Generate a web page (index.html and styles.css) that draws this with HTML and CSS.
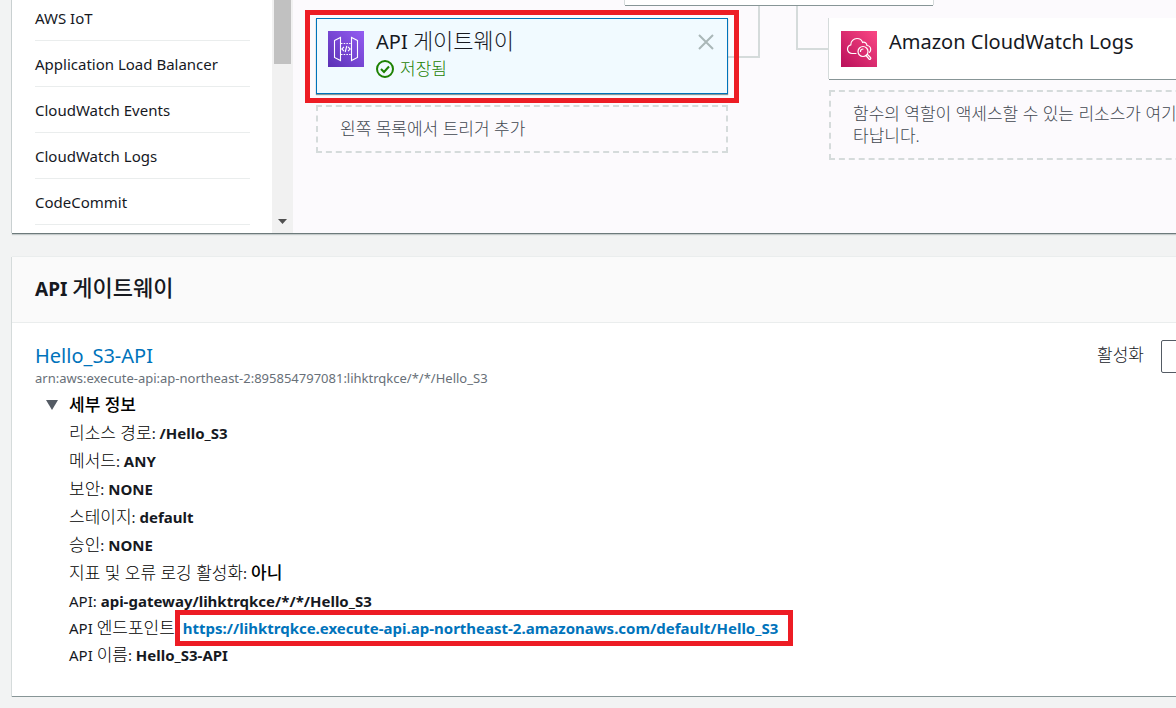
FILE: index.html
```html
<!DOCTYPE html>
<html lang="ko">
<head>
<meta charset="utf-8">
<meta name="viewport" content="width=device-width, initial-scale=1">
<title>API 게이트웨이</title>
<link rel="stylesheet" href="styles.css">
</head>
<body>
<main class="page">
  <section class="designer">
    <ul class="services">
      <li>AWS IoT</li>
      <li>Application Load Balancer</li>
      <li>CloudWatch Events</li>
      <li>CloudWatch Logs</li>
      <li>CodeCommit</li>
    </ul>
    <div class="scrollbar">
      <div class="scroll-thumb"></div>
      <svg class="scroll-arrow" viewBox="0 0 9 5"><path d="M0 0h9L4.500 5z" fill="#505050"/></svg>
    </div>
    <div class="canvas">
      <div class="function-card"></div>
      <div class="flow">
        <div class="column">
          <article class="card trigger">
            <svg class="service-icon" viewBox="0 0 36 36">
              <defs><linearGradient id="violet" x1="0" y1="1" x2="1" y2="0"><stop offset="0" stop-color="#5a30b5"/><stop offset="1" stop-color="#945df2"/></linearGradient></defs>
              <rect width="36" height="36" fill="url(#violet)"/>
              <g fill="none" stroke="#fff" stroke-width="1.100">
                <path d="M6.500 9.500 12.500 6.500v23L6.500 26.500zM29.500 9.500 23.500 6.500v23L29.500 26.500z"/>
                <path d="M13 12.500h10M13 23.500h10" stroke-dasharray="1.500 1.200"/>
                <path d="M16 15.800 13.800 18l2.200 2.200M20 15.800 22.200 18l-2.200 2.200M18.800 15l-1.600 6"/>
              </g>
            </svg>
            <div class="card-text">
              <h2 class="card-title">API <span class="ko-title">게이트웨이</span></h2>
              <p class="saved">
                <svg class="check" viewBox="0 0 18 18" fill="none" stroke="#1d8102" stroke-width="2"><circle cx="9" cy="9" r="8"/><path d="M5 9l3 3 5-5.500"/></svg>
                <span>저장됨</span>
              </p>
            </div>
            <button class="close" type="button" aria-label="제거">
              <svg viewBox="0 0 14 14" stroke="#aab7b8" stroke-width="2"><path d="M0 0l14 14M14 0L0 14"/></svg>
            </button>
            <div class="highlight highlight-card"></div>
          </article>
          <p class="placeholder">왼쪽 목록에서 트리거 추가</p>
        </div>
        <div class="links"><i class="link-left"></i><i class="link-right"></i></div>
        <div class="column">
          <article class="card resource">
            <svg class="service-icon" viewBox="0 0 36 36">
              <defs><linearGradient id="pink" x1="0" y1="1" x2="1" y2="0"><stop offset="0" stop-color="#b9105a"/><stop offset="1" stop-color="#fa4784"/></linearGradient></defs>
              <rect width="36" height="36" fill="url(#pink)"/>
              <g fill="none" stroke="#fff" stroke-width="1.200" stroke-linecap="round">
                <path d="M15 22.500h-4c-2.500 0-4.500-2-4.500-4.200 0-2.300 1.400-3.900 3.300-4.400-.2-3.500 2.700-6.400 6.200-6.400 2.700 0 4.800 1.500 5.600 3.900 2-.8 4.300.8 4.400 3.100 2.300.3 3.700 1.900 3.700 4 0 1.200-.5 2.200-1.200 2.900"/>
                <circle cx="22" cy="20.500" r="5"/><path d="M19.500 20.500a2.500 2.500 0 0 1 2.500-2.500"/>
                <path d="M25 24.500l3 3.500c1 1 2.500-.4 1.500-1.500l-3-3"/>
              </g>
            </svg>
            <h2 class="card-title">Amazon CloudWatch Logs</h2>
          </article>
          <p class="placeholder">함수의 역할이 액세스할 수 있는 리소스가 여기에 나타납니다.</p>
        </div>
      </div>
    </div>
  </section>

  <section class="panel">
    <header class="panel-head"><h1 class="panel-title">API <span class="ko-title">게이트웨이</span></h1></header>
    <div class="panel-body">
      <div class="api-row">
        <div>
          <a class="api-name" href="#api">Hello_S3-API</a>
          <p class="arn">arn:aws:execute-api:ap-northeast-2:895854797081:lihktrqkce/*/*/Hello_S3</p>
        </div>
        <div class="enable"><label for="enable">활성화</label><button id="enable" class="toggle" type="button"></button></div>
      </div>
      <details class="info" open>
        <summary><svg class="caret" viewBox="0 0 12 10"><path d="M0 0h12L6 10z" fill="#545b64"/></svg>세부 정보</summary>
        <ul class="facts">
          <li>리소스 경로<span class="latin">: <b>/Hello_S3</b></span></li>
          <li>메서드<span class="latin">: <b>ANY</b></span></li>
          <li>보안<span class="latin">: <b>NONE</b></span></li>
          <li>스테이지<span class="latin">: <b>default</b></span></li>
          <li>승인<span class="latin">: <b>NONE</b></span></li>
          <li>지표 및 오류 로깅 활성화<span class="latin">: </span><b class="ko-value">아니</b></li>
          <li class="api"><span class="latin">API: <b>api-gateway/lihktrqkce/*/*/Hello_S3</b></span></li>
          <li class="api"><span class="latin">API </span>엔드포인트<span class="latin">: <span class="endpoint"><a href="#endpoint">https://lihktrqkce.execute-api.ap-northeast-2.amazonaws.com/default/Hello_S3</a><span class="highlight highlight-link"></span></span></span></li>
          <li class="api"><span class="latin">API </span>이름<span class="latin">: <b>Hello_S3-API</b></span></li>
        </ul>
      </details>
    </div>
  </section>
</main>
</body>
</html>
```
FILE: styles.css
```css
* { box-sizing: border-box; }
body {
  margin: 0;
  overflow: hidden;
  background: #f2f3f3;
  color: #16191f;
  font-family: "Noto Sans", "Noto Sans CJK KR", sans-serif;
  font-size: 15px;
}
h1, h2, p, ul { margin: 0; padding: 0; }
ul { list-style: none; }
a { color: #0073bb; text-decoration: none; }

/* the console is wider than the window and runs past its right edge */
.page { margin: 0 -88px 0 12px; }

.designer {
  display: flex;
  height: 233px;
  background: #fff;
  box-shadow: 0 1px 0 #6d7a7b, -1px 0 0 #c9d0d1, 0 2px 1px #c5cbcb;
}
.services { width: 260px; padding: 0 22px 0 23px; overflow: hidden; margin-top: -5px; }
.services li { height: 46px; line-height: 46px; border-bottom: 1px solid #eaeded; white-space: nowrap; }
.scrollbar { display: flex; flex-direction: column; justify-content: space-between; align-items: center; width: 21px; padding-bottom: 9px; background: #f1f1f1; }
.scroll-thumb { width: 17px; height: 64px; background: #c1c1c1; }
.scroll-arrow { width: 9px; height: 5px; }

.canvas { flex: 1; padding: 0 23px; background: #fcfafd; }
.function-card { width: 308px; height: 5px; margin: 0 auto; background: #fff; box-shadow: 0 1px 0 #879596, -1px 0 0 #d5dbdb, 1px 0 0 #d5dbdb; }
.flow { display: grid; grid-template-columns: 1fr 101px 1fr; padding-top: 1px; }
.column { padding-top: 12px; }
.card { position: relative; display: flex; gap: 12px; padding: 12px; background: #fff; }
.trigger { height: 76px; padding: 11px; border: 1px solid #0073bb; background: #f1faff; box-shadow: 0 1px 1px #879596; }
.resource { height: 61px; box-shadow: 0 1px 0 #879596, -1px 0 0 #d5dbdb; }
.service-icon { flex: none; width: 36px; height: 36px; margin-top: 1px; }
.card-text { flex: 1; }
.card-title { font-size: 20px; line-height: 24px; font-weight: 400; }
.trigger .card-title { line-height: 20px; }
.ko-title { font-size: 22px; font-weight: 300; }
.saved { display: flex; align-items: center; gap: 6px; color: #1d8102; font-size: 17px; font-weight: 300; line-height: 22px; margin-top: 6px; }
.check { width: 18px; height: 18px; }
.close { align-self: flex-start; display: flex; padding: 5px 3px; border: 0; background: none; }
.close svg { width: 14px; height: 14px; overflow: visible; }
.placeholder { margin-top: 11px; padding: 11px 22px; border: 2px dashed #d5dbdb; color: #414750; font-size: 17px; font-weight: 300; line-height: 22px; }
.links { display: flex; justify-content: space-between; align-items: flex-start; }
.link-left { width: 32px; height: 52px; border: solid #d5dbdb; border-width: 0 2px 2px 0; }
.link-right { width: 33px; height: 44px; border: solid #d5dbdb; border-width: 0 0 2px 2px; }

.highlight { position: absolute; border: 5px solid #ed1c24; pointer-events: none; }
.highlight-card { inset: -9px -12px -10px; }

.panel { margin-top: 24px; border-bottom: 1px solid #879596; background: #fff; box-shadow: -1px 0 0 #d5dbdb, 0 -1px 0 #eaeded; }
.panel-head { padding: 15px 23px 18px; border-bottom: 1px solid #eaeded; background: #fafafa; }
.panel-title { font-size: 19px; line-height: 30px; font-weight: 700; }
.panel-title .ko-title { font-weight: 500; }
.panel-body { padding: 17px 23px 28px; }
.api-row { display: flex; justify-content: space-between; }
.api-name { display: block; font-size: 20px; line-height: 31px; }
.arn { color: #687078; font-size: 13px; line-height: 14px; }
.enable { display: flex; align-items: flex-start; align-self: flex-start; gap: 17px; font-size: 17px; font-weight: 300; line-height: 30px; }
.toggle { width: 80px; height: 33px; border: 1px solid #545b64; border-radius: 2px; background: #fff; }
.info { padding: 6px 0 0 11px; color: #000; font-size: 17px; font-weight: 300; line-height: 28px; }
.info summary { display: flex; align-items: center; gap: 11px; font-weight: 500; }
.caret { width: 12px; height: 10px; }
.facts { padding-left: 23px; }
.facts li { height: 28px; white-space: nowrap; }
.facts .api { height: 27px; line-height: 27px; }
.facts b { font-weight: 700; }
.facts .ko-value { font-weight: 500; }
.latin { color: #16191f; font-size: 15px; font-weight: 400; }
.endpoint { position: relative; display: inline-block; line-height: 22px; font-weight: 700; }
.endpoint a { position: relative; z-index: 1; }
.highlight-link { inset: -7px -15px -7px -8px; background: #fff; }
```
